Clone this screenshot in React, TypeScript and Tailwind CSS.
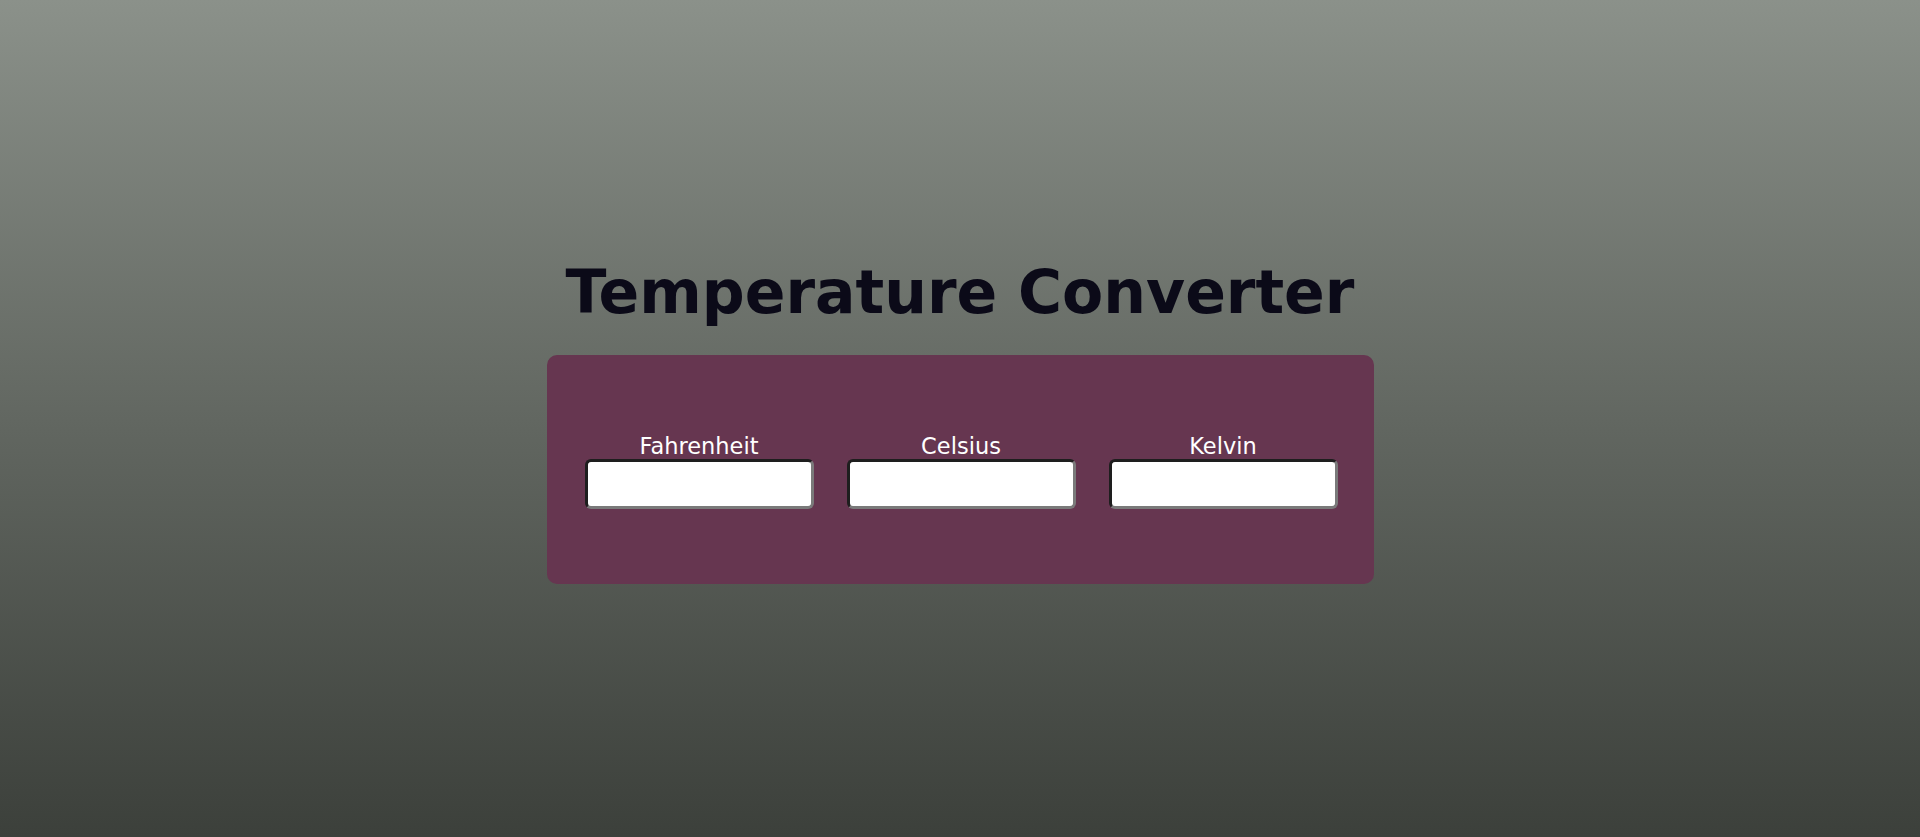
import React from "react";

export default function App() {
  const fields = ["Fahrenheit", "Celsius", "Kelvin"];
  return (
    <div
      className="w-full h-[837px] flex flex-col items-center justify-center bg-gradient-to-b from-[#8b918a] to-[#3c403b]"
      style={{ fontFamily: '"DejaVu Sans", Verdana, sans-serif' }}
    >
      <h1 className="text-[60px] leading-[70px] font-bold text-[#0b0a18] mt-[4px]">
        Temperature Converter
      </h1>
      <div className="mt-[28px] w-[827px] h-[229px] rounded-[10px] bg-[#663650] pl-[38px] pr-[36px] pt-[78px] flex gap-[33px]">
        {fields.map((f) => (
          <div key={f} className="w-[229px] flex flex-col items-center">
            <label className="text-[22.5px] leading-[26px] text-white">{f}</label>
            <input
              type="text"
              className="w-[229px] h-[50px] bg-white rounded-[6px] border-[3px] border-t-[#1e1e1e] border-l-[#1e1e1e] border-b-[#7a7a7a] border-r-[#7a7a7a] outline-none"
            />
          </div>
        ))}
      </div>
    </div>
  );
}
